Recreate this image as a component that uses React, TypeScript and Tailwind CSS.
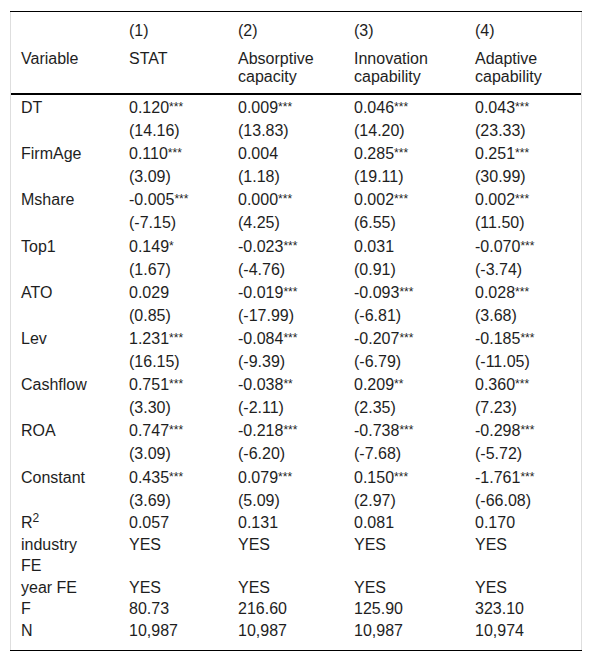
import React from "react";

type Cell = { v: string; s?: string };

function c(str: string): Cell {
  const m = str.match(/^([^*]*)(\**)$/);
  if (m && m[2]) return { v: m[1], s: m[2] };
  return { v: str };
}

const upper: [string, string[]][] = [
  ["DT", ["0.120***", "0.009***", "0.046***", "0.043***"]],
  ["", ["(14.16)", "(13.83)", "(14.20)", "(23.33)"]],
  ["FirmAge", ["0.110***", "0.004", "0.285***", "0.251***"]],
  ["", ["(3.09)", "(1.18)", "(19.11)", "(30.99)"]],
  ["Mshare", ["-0.005***", "0.000***", "0.002***", "0.002***"]],
  ["", ["(-7.15)", "(4.25)", "(6.55)", "(11.50)"]],
  ["Top1", ["0.149*", "-0.023***", "0.031", "-0.070***"]],
  ["", ["(1.67)", "(-4.76)", "(0.91)", "(-3.74)"]],
  ["ATO", ["0.029", "-0.019***", "-0.093***", "0.028***"]],
  ["", ["(0.85)", "(-17.99)", "(-6.81)", "(3.68)"]],
  ["Lev", ["1.231***", "-0.084***", "-0.207***", "-0.185***"]],
  ["", ["(16.15)", "(-9.39)", "(-6.79)", "(-11.05)"]],
  ["Cashflow", ["0.751***", "-0.038**", "0.209**", "0.360***"]],
  ["", ["(3.30)", "(-2.11)", "(2.35)", "(7.23)"]],
  ["ROA", ["0.747***", "-0.218***", "-0.738***", "-0.298***"]],
  ["", ["(3.09)", "(-6.20)", "(-7.68)", "(-5.72)"]],
  ["Constant", ["0.435***", "0.079***", "0.150***", "-1.761***"]],
  ["", ["(3.69)", "(5.09)", "(2.97)", "(-66.08)"]],
];

const lower: [React.ReactNode, string[]][] = [
  [
    <>
      R<sup>2</sup>
    </>,
    ["0.057", "0.131", "0.081", "0.170"],
  ],
  [
    <>
      industry
      <br />
      FE
    </>,
    ["YES", "YES", "YES", "YES"],
  ],
  ["year FE", ["YES", "YES", "YES", "YES"]],
  ["F", ["80.73", "216.60", "125.90", "323.10"]],
  ["N", ["10,987", "10,987", "10,987", "10,974"]],
];

const widths = ["w-[108px]", "w-[109px]", "w-[116px]", "w-[121px]", "w-[116px]"];

function Value({ cell }: { cell: Cell }) {
  return (
    <>
      {cell.v}
      {cell.s ? (
        <span className="relative -top-[2px] text-[12px]">{cell.s}</span>
      ) : null}
    </>
  );
}

export default function App() {
  return (
    <div
      className="bg-white w-[592px] h-[664px] pt-[11px] pl-[10px] text-[#1e1e1e] text-[16px]"
      style={{ fontFamily: '"Liberation Sans", Arial, sans-serif' }}
    >
      <div className="w-[572px] border-t border-b border-black">
        <div className="border-x border-[#dedede]">
          {/* header row 1 */}
          <div className="flex leading-[18px] pt-[10px] pb-[4px]">
            {["", "(1)", "(2)", "(3)", "(4)"].map((t, i) => (
              <div key={i} className={`${widths[i]} pl-[10px]`}>
                {t}
              </div>
            ))}
          </div>
          {/* header row 2 */}
          <div className="flex leading-[18px] pt-[6px] pb-[7px] border-b-2 border-black">
            <div className={`${widths[0]} pl-[10px]`}>Variable</div>
            <div className={`${widths[1]} pl-[10px]`}>STAT</div>
            <div className={`${widths[2]} pl-[10px]`}>
              Absorptive
              <br />
              capacity
            </div>
            <div className={`${widths[3]} pl-[10px]`}>
              Innovation
              <br />
              capability
            </div>
            <div className={`${widths[4]} pl-[10px]`}>
              Adaptive
              <br />
              capability
            </div>
          </div>
          {/* body */}
          <div className="pt-[1px]">
            {upper.map(([label, cs], ri) => (
              <div key={ri} className="flex h-[23.1px] leading-[23.1px]">
                <div className={`${widths[0]} pl-[10px]`}>{label}</div>
                {cs.map((s, ci) => (
                  <div key={ci} className={`${widths[ci + 1]} pl-[10px]`}>
                    <Value cell={c(s)} />
                  </div>
                ))}
              </div>
            ))}
            <div className="pt-[0.5px] pb-[9px]">
              {lower.map(([label, cs], ri) => (
                <div key={ri} className="flex leading-[21.5px]">
                  <div className={`${widths[0]} pl-[10px]`}>{label}</div>
                  {cs.map((s, ci) => (
                    <div key={ci} className={`${widths[ci + 1]} pl-[10px]`}>
                      <Value cell={c(s)} />
                    </div>
                  ))}
                </div>
              ))}
            </div>
          </div>
        </div>
      </div>
    </div>
  );
}
